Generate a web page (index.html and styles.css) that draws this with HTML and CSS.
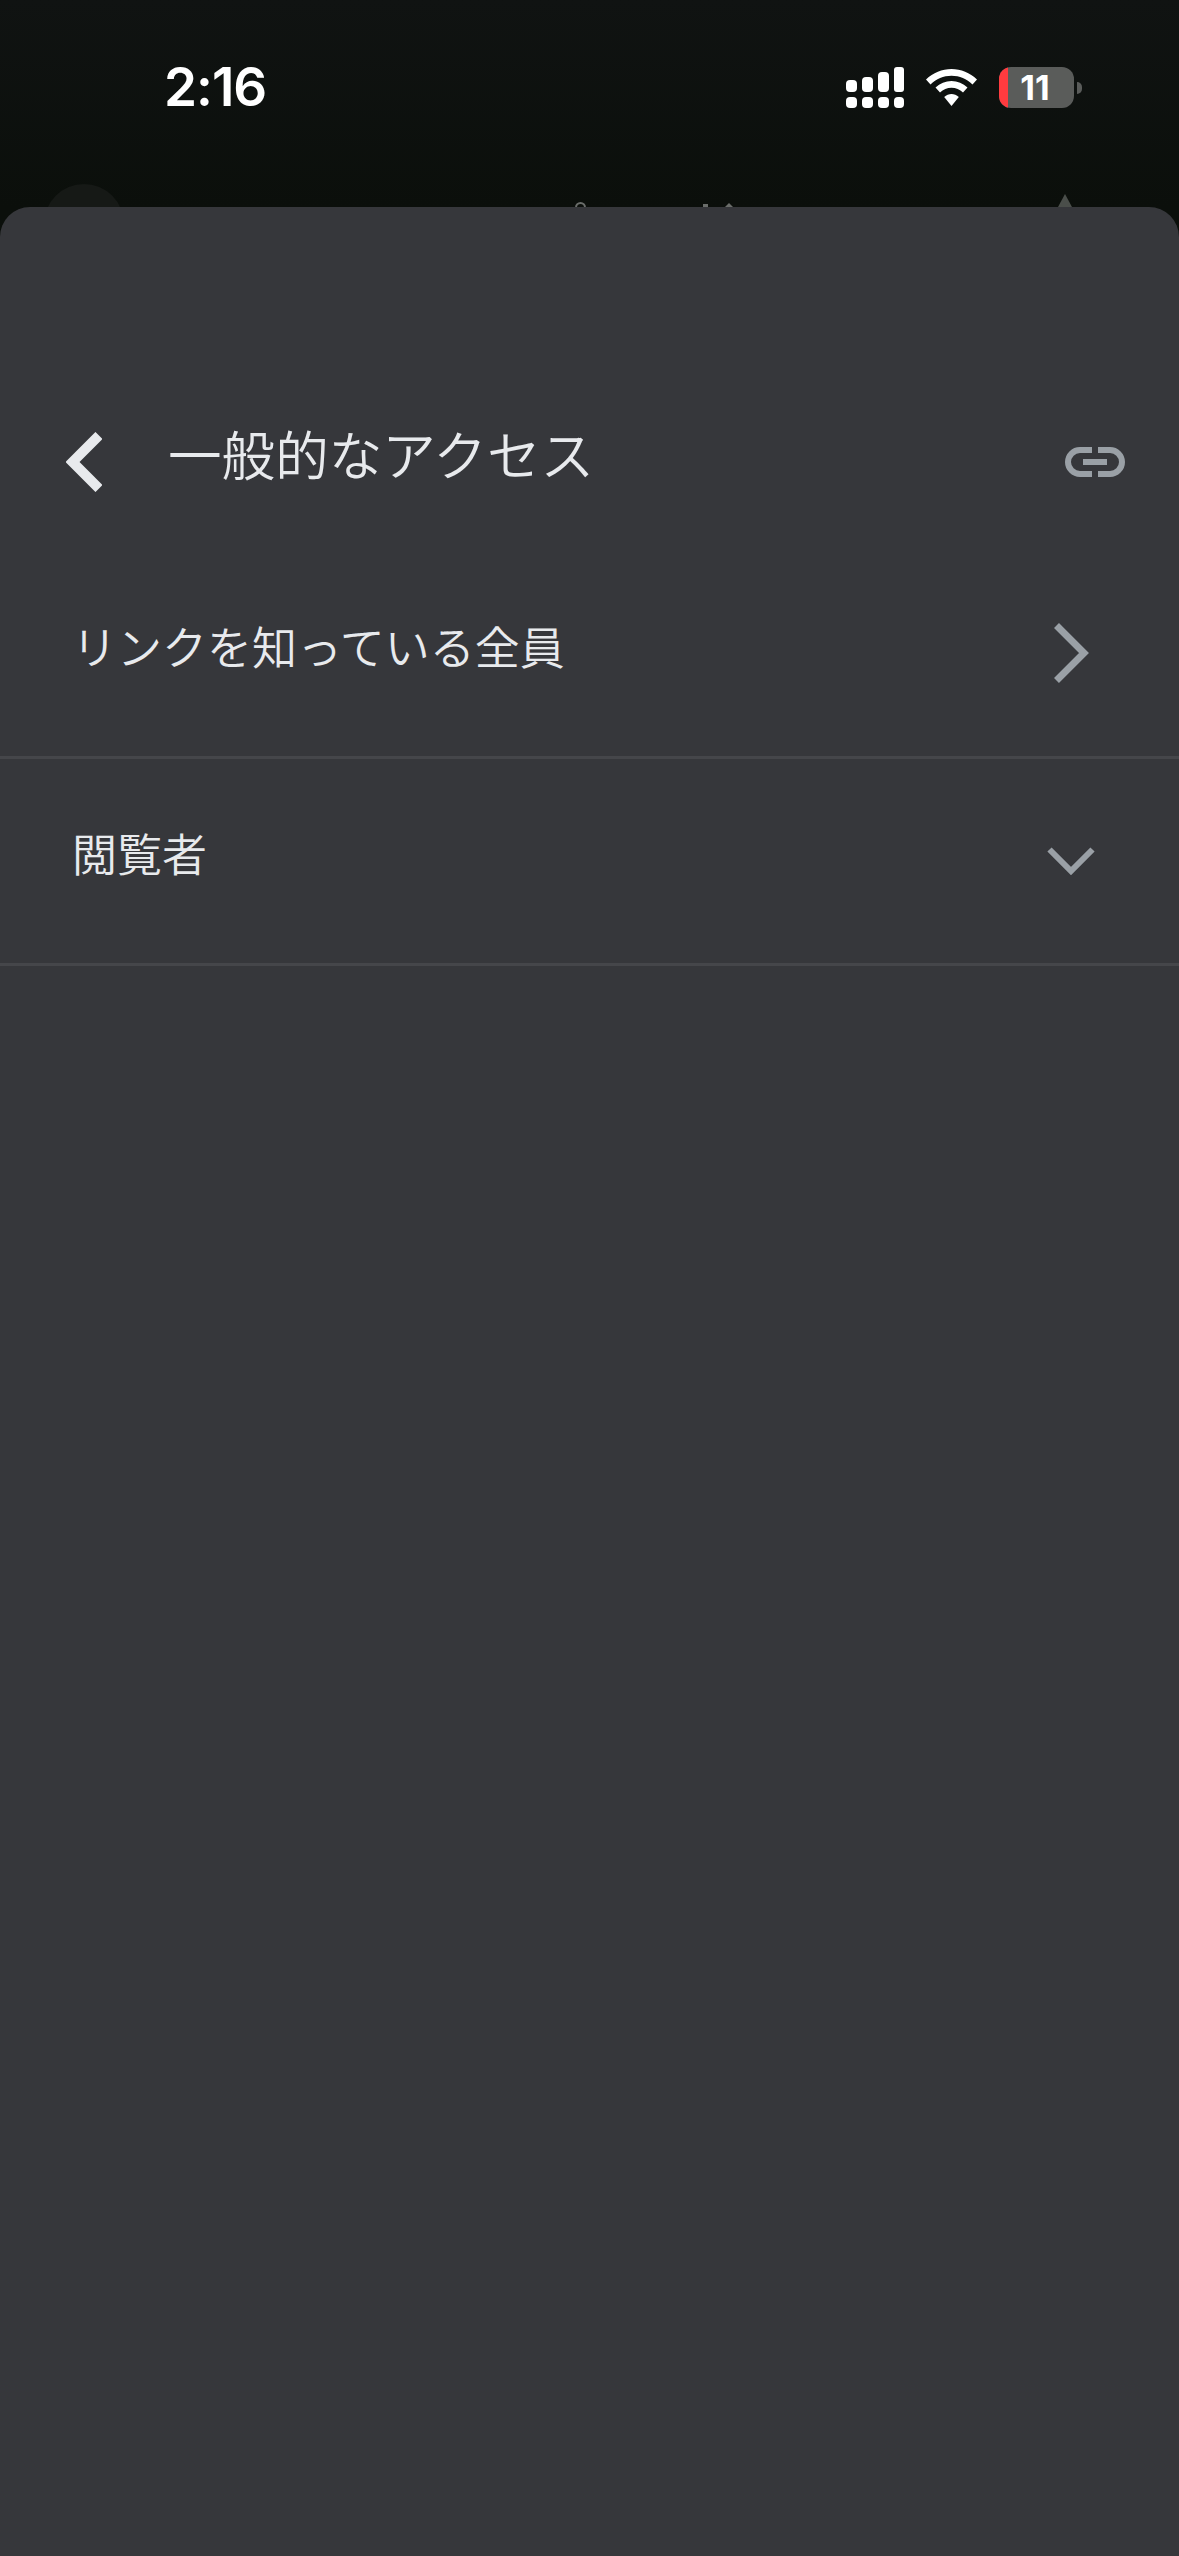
FILE: index.html
```html
<!DOCTYPE html>
<html lang="ja">
<head>
    <meta charset="UTF-8">
    <title>一般的なアクセス</title>
    <link rel="stylesheet" href="styles.css">
</head>
<body>
<div class="screen">
    <div class="status_bar">
        <span class="time">2:16</span>
        <div class="status_icons">
            <svg class="signal" width="58" height="41" viewBox="0 0 58 41" fill="#fff">
                <rect x="0" y="13" width="11" height="12" rx="4"/>
                <rect x="16" y="10" width="11" height="15" rx="4"/>
                <rect x="32" y="5" width="11" height="20" rx="4"/>
                <rect x="48" y="0" width="10" height="25" rx="3"/>
                <rect x="0" y="30" width="11" height="11" rx="4"/>
                <rect x="16" y="30" width="11" height="11" rx="4"/>
                <rect x="32" y="30" width="11" height="11" rx="4"/>
                <rect x="48" y="30" width="10" height="11" rx="4"/>
            </svg>
            <svg class="wifi" width="51" height="37" viewBox="0 0 51 37" fill="#fff">
                <path d="M25.5 0C16 0 7.200 3.700 0 10.500L4.500 15.500C10.200 10 17.500 6.800 25.500 6.800C33.500 6.800 40.800 10 46.500 15.500L51 10.500C43.800 3.700 35 0 25.500 0Z"/>
                <path d="M25.500 12C19.500 12 14 14.400 9.500 18.600L14 23.500C17.200 20.500 21.200 18.800 25.500 18.800C29.800 18.800 33.800 20.500 37 23.500L41.500 18.600C37 14.400 31.500 12 25.500 12Z"/>
                <path d="M25.500 25C23 25 20.300 26 18.200 28L25.500 37L32.800 28C30.700 26 28 25 25.500 25Z"/>
            </svg>
            <div class="battery">
                <div class="battery_low"></div>
                <span class="battery_num">11</span>
            </div>
            <div class="battery_nib"></div>
        </div>
    </div>

    <!-- toolbar of the page behind the sheet, only the tops show -->
    <div class="behind_avatar"></div>
    <div class="behind_ring"></div>
    <div class="behind_tick"></div>
    <div class="behind_peak"></div>
    <div class="behind_star"></div>

    <div class="sheet">
        <div class="sheet_head">
            <svg class="back" width="36" height="60" viewBox="0 0 36 60" fill="none" stroke="#e8eaed" stroke-width="10">
                <path d="M33 3.500L6.500 30L33 56.500"/>
            </svg>
            <h1 class="sheet_title">一般的なアクセス</h1>
            <svg class="link" width="60" height="30" viewBox="0 0 60 30" fill="none" stroke="#9aa0a6" stroke-width="6">
                <path d="M27 3H15C8.400 3 3 8.400 3 15C3 21.600 8.400 27 15 27H27"/>
                <path d="M33 3H45C51.600 3 57 8.400 57 15C57 21.600 51.600 27 45 27H33"/>
                <path d="M18 15H42"/>
            </svg>
        </div>
        <div class="row row_link">
            <span class="row_text">リンクを知っている全員</span>
            <svg class="row_arrow" width="35" height="60" viewBox="0 0 35 60" fill="none" stroke="#9aa0a6" stroke-width="7">
                <path d="M2.500 2.500L30 30L2.500 57.500"/>
            </svg>
        </div>
        <div class="row row_role">
            <span class="row_text row_text_role">閲覧者</span>
            <svg class="row_down" width="48" height="28" viewBox="0 0 48 28" fill="none" stroke="#9aa0a6" stroke-width="6">
                <path d="M2.500 2.500L24 24L45.500 2.500"/>
            </svg>
        </div>
    </div>
</div>
</body>
</html>
```
FILE: styles.css
```css
* {
    box-sizing: border-box;
    margin: 0;
    padding: 0;
}

body {
    background-color: #0d100e;
    font-family: "Noto Sans CJK JP", "Noto Sans", sans-serif;
}

.screen {
    width: 1179px;
    height: 2556px;
    position: relative;
    overflow: hidden;
    display: flex;
    flex-direction: column;
    background: linear-gradient(#101312, #0b0f0b 207px);
}

.status_bar {
    height: 207px;
    padding: 67px 97px 0 164px;
    display: flex;
    justify-content: space-between;
    align-items: flex-start;
}

.time {
    font-family: Inter, "Liberation Sans", sans-serif;
    font-size: 53px;
    font-weight: 600;
    line-height: 41px;
    letter-spacing: -1px;
    color: #fff;
}

.status_icons {
    display: flex;
    align-items: center;
    height: 41px;
}

.signal {
    margin-right: 22px;
}

.wifi {
    margin-right: 22px;
}

.battery {
    width: 75px;
    height: 41px;
    padding-right: 3px;
    border-radius: 12px;
    background-color: #5a5c5a;
    position: relative;
    overflow: hidden;
    text-align: center;
}

.battery_low {
    position: absolute;
    left: 0;
    top: 0;
    bottom: 0;
    width: 9px;
    background-color: #ff3b3f;
}

.battery_num {
    position: relative;
    font-family: Inter, "Liberation Sans", sans-serif;
    font-size: 34px;
    font-weight: 700;
    line-height: 41px;
    color: #fff;
}

.battery_nib {
    width: 5px;
    height: 12px;
    margin-left: 3px;
    border-radius: 0 6px 6px 0;
    background-color: #5a5c5a;
}

.behind_avatar {
    position: absolute;
    left: 44px;
    top: 184px;
    width: 80px;
    height: 80px;
    border-radius: 50%;
    background-color: #161916;
}

.behind_ring {
    position: absolute;
    left: 575px;
    top: 202px;
    width: 11px;
    height: 16px;
    border: 2px solid #6a6d6a;
    border-radius: 6px;
}

.behind_tick {
    position: absolute;
    left: 703px;
    top: 204px;
    width: 5px;
    height: 4px;
    background-color: #6a6d6a;
}

.behind_peak {
    position: absolute;
    left: 724px;
    top: 203px;
    width: 10px;
    height: 5px;
    background-color: #6a6d6a;
    clip-path: polygon(50% 0, 100% 100%, 0 100%);
}

.behind_star {
    position: absolute;
    left: 1058px;
    top: 194px;
    width: 14px;
    height: 13px;
    background-color: #4a4e4a;
    clip-path: polygon(50% 0, 100% 100%, 0 100%);
}

.sheet {
    flex: 1;
    position: relative;
    border-radius: 30px 30px 0 0;
    background-color: #36373b;
    color: #e8eaed;
}

.sheet_head {
    height: 342px;
    padding: 225px 54px 0 66px;
    display: flex;
    align-items: flex-start;
}

.back {
    flex-shrink: 0;
}

.sheet_title {
    flex: 1;
    margin: -5px 0 0 66px;
    font-size: 53.6px;
    font-weight: 350;
    line-height: 52px;
}

.link {
    margin-top: 15px;
}

.row {
    height: 207px;
    padding-left: 72px;
    display: flex;
    justify-content: space-between;
    border-bottom: 3px solid #45464a;
}

.row_link {
    height: 210px;
    padding-right: 90px;
    align-items: center;
}

.row_role {
    padding-right: 84px;
    align-items: center;
}

.row_text {
    margin-bottom: 13px;
    font-size: 45px;
    font-weight: 350;
    line-height: 48px;
}

.row_text_role {
    margin-bottom: 16px;
}
```
